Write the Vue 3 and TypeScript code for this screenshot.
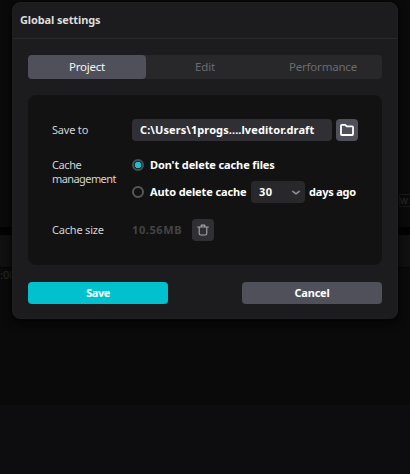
<script setup lang="ts">
import { ref } from 'vue'

const tabs = ['Project', 'Edit', 'Performance']
const activeTab = ref('Project')
const autoDelete = ref(false)
</script>

<template>
  <div class="screen">
    <div class="backdrop">
      <div class="preview"><span class="zoom-label">w</span></div>
      <div class="splitter"></div>
      <div class="toolbar"></div>
      <div class="timeline"><span>:00</span></div>
      <div class="tracks"></div>
    </div>

    <section class="dialog">
      <header class="header"><span class="title">Global settings</span></header>

      <nav class="tabs">
        <button
          v-for="tab in tabs"
          :key="tab"
          class="tab"
          :class="{ active: tab === activeTab }"
          @click="activeTab = tab"
        >{{ tab }}</button>
      </nav>

      <div class="panel">
        <div class="row save-row">
          <span class="label"><span class="l-save">Save to</span></span>
          <div class="path"><span>C:\Users\1progs....lveditor.draft</span></div>
          <button class="icon-button folder">
            <svg width="16" height="14" viewBox="0 0 16 14">
              <path d="M2 2.7Q2 1.9 2.8 1.9H6.2L7.8 3.4H13.2Q14 3.4 14 4.2V11.2Q14 12 13.2 12H2.8Q2 12 2 11.2Z" />
            </svg>
          </button>
        </div>

        <div class="row cache-row">
          <span class="label wrap"><span class="l-cache">Cache</span><br /><span class="l-management">management</span></span>
          <div class="options">
            <div class="option" @click="autoDelete = false">
              <i class="radio" :class="{ checked: !autoDelete }"></i>
              <span class="t-keep">Don't delete cache files</span>
            </div>
            <div class="option second" @click="autoDelete = true">
              <i class="radio" :class="{ checked: autoDelete }"></i>
              <span class="t-auto">Auto delete cache</span>
              <div class="select">
                <span>30</span>
                <svg width="10" height="6" viewBox="0 0 10 6"><path d="M1.8 1.4L5 3.9L8.2 1.4" /></svg>
              </div>
              <span class="t-days">days ago</span>
            </div>
          </div>
        </div>

        <div class="row size-row">
          <span class="label"><span class="l-size">Cache size</span></span>
          <span class="size">10.56MB</span>
          <button class="icon-button trash">
            <svg width="14" height="14" viewBox="0 0 14 14">
              <path d="M1.6 4H12.4M5.2 3.8V2.1H8.8V3.8M3.2 4V10.5Q3.2 12 4.7 12H9.3Q10.8 12 10.8 10.5V4" />
            </svg>
          </button>
        </div>
      </div>

      <footer class="footer">
        <button class="save"><span>Save</span></button>
        <button class="cancel"><span>Cancel</span></button>
      </footer>
    </section>
  </div>
</template>

<style>
body {
  margin: 0;
  background: #0a0a0a;
}
</style>

<style scoped>
* {
  box-sizing: border-box;
}
.screen {
  display: grid;
  width: 410px;
  height: 474px;
  overflow: hidden;
  font-family: "Noto Sans", "Open Sans", sans-serif;
  font-size: 11px;
  line-height: 14px;
  color: #fff;
  white-space: nowrap;
}
.backdrop,
.dialog {
  grid-area: 1 / 1;
}
.backdrop {
  display: flex;
  flex-direction: column;
  background: #0a0a0a;
  color: #2a2a2a;
}
.preview {
  display: flex;
  justify-content: flex-end;
  height: 227px;
  padding-top: 194px;
}
.zoom-label {
  width: 11px;
  height: 13px;
  border: 1px solid #1a1a1a;
  border-right: 0;
  font-size: 10px;
  line-height: 11px;
}
.splitter {
  height: 8px;
  background: #020202;
}
.toolbar {
  height: 33px;
  background: #101011;
  border-bottom: 1px solid #050505;
}
.timeline {
  height: 137px;
}
.tracks {
  flex: 1;
  background: #0d0d0f;
}
.dialog {
  position: relative;
  width: 386px;
  height: 317px;
  margin: 2px 0 0 12px;
  border: 1px solid #202021;
  border-radius: 8px;
  background: #1c1c1e;
  box-shadow: 0 4px 8px #040404, 0 0 2px #000;
}
.header {
  display: flex;
  align-items: center;
  height: 36px;
  padding: 0 0 2px 7px;
  border-bottom: 1px solid #29292b;
}
.title {
  font-weight: 700;
  letter-spacing: -0.13px;
  color: #dcdcdc;
}
button {
  display: flex;
  align-items: center;
  justify-content: center;
  padding: 0;
  border: 0;
  color: inherit;
  font: inherit;
}
.tabs {
  display: grid;
  grid-template-columns: repeat(3, 1fr);
  height: 24px;
  margin: 16px 15px 0;
  border-radius: 4px;
  background: #28282b;
}
.tab {
  border-radius: 4px;
  background: none;
  font-size: 11.5px;
  letter-spacing: -0.2px;
  color: #6b6b6d;
}
.tab.active {
  background: #50505a;
  color: #f5f5f5;
}
.panel {
  height: 170px;
  margin: 16px 15px 0;
  padding: 24px 24px 0;
  border-radius: 8px;
  background: #121212;
}
.row {
  display: flex;
}
.label {
  width: 80px;
  color: #d2d2d2;
}
.l-save,
.l-size {
  letter-spacing: -0.2px;
}
.l-cache {
  letter-spacing: -0.4px;
}
.l-management {
  letter-spacing: -0.58px;
}
.save-row,
.size-row {
  align-items: center;
  height: 22px;
}
.path {
  display: flex;
  align-items: center;
  width: 200px;
  height: 22px;
  margin-right: 4px;
  padding-left: 8px;
  border-radius: 4px;
  background: #303034;
  font-weight: 700;
  letter-spacing: 0.09px;
}
.icon-button {
  width: 22px;
  height: 22px;
  border-radius: 4px;
}
svg {
  fill: none;
  stroke-linejoin: round;
  stroke-linecap: round;
}
.folder {
  background: #50505a;
  stroke: #fff;
  stroke-width: 1.8;
}
.cache-row {
  height: 62px;
  margin-top: 16px;
}
.options {
  font-weight: 700;
}
.option {
  display: flex;
  align-items: center;
  height: 16px;
}
.option.second {
  height: 22px;
  margin-top: 8px;
}
.radio {
  width: 12px;
  height: 12px;
  margin-right: 6px;
  border: 2px solid #58585c;
  border-radius: 50%;
}
.radio.checked {
  border-color: #435256;
  background: radial-gradient(circle, #1fbccb 2.9px, #151b1c 3.6px);
}
.t-keep,
.t-auto,
.t-days {
  letter-spacing: -0.12px;
}
.t-days {
  letter-spacing: -0.2px;
}
.t-auto {
  width: 101px;
}
.select {
  display: flex;
  align-items: center;
  justify-content: space-between;
  width: 54px;
  height: 22px;
  margin-right: 4px;
  padding: 0 4px 0 8px;
  border-radius: 4px;
  background: #28282b;
  stroke: #929296;
  stroke-width: 1.5;
}
.select span {
  letter-spacing: 0.4px;
}
.select svg {
  margin-top: 2px;
}
.wrap {
  padding-top: 1px;
}
.size {
  width: 60px;
  font-weight: 700;
  letter-spacing: 0.6px;
  color: #444446;
}
.trash {
  background: #303034;
  stroke: #a4a4a9;
  stroke-width: 1.1;
}
.footer {
  display: flex;
  justify-content: space-between;
  margin: 17px 15px 0;
  font-weight: 700;
}
.save,
.cancel {
  width: 140px;
  height: 22px;
  border-radius: 4px;
  background: #50505a;
  letter-spacing: -0.2px;
}
.save {
  background: #00c1cd;
  letter-spacing: -0.5px;
}
</style>
